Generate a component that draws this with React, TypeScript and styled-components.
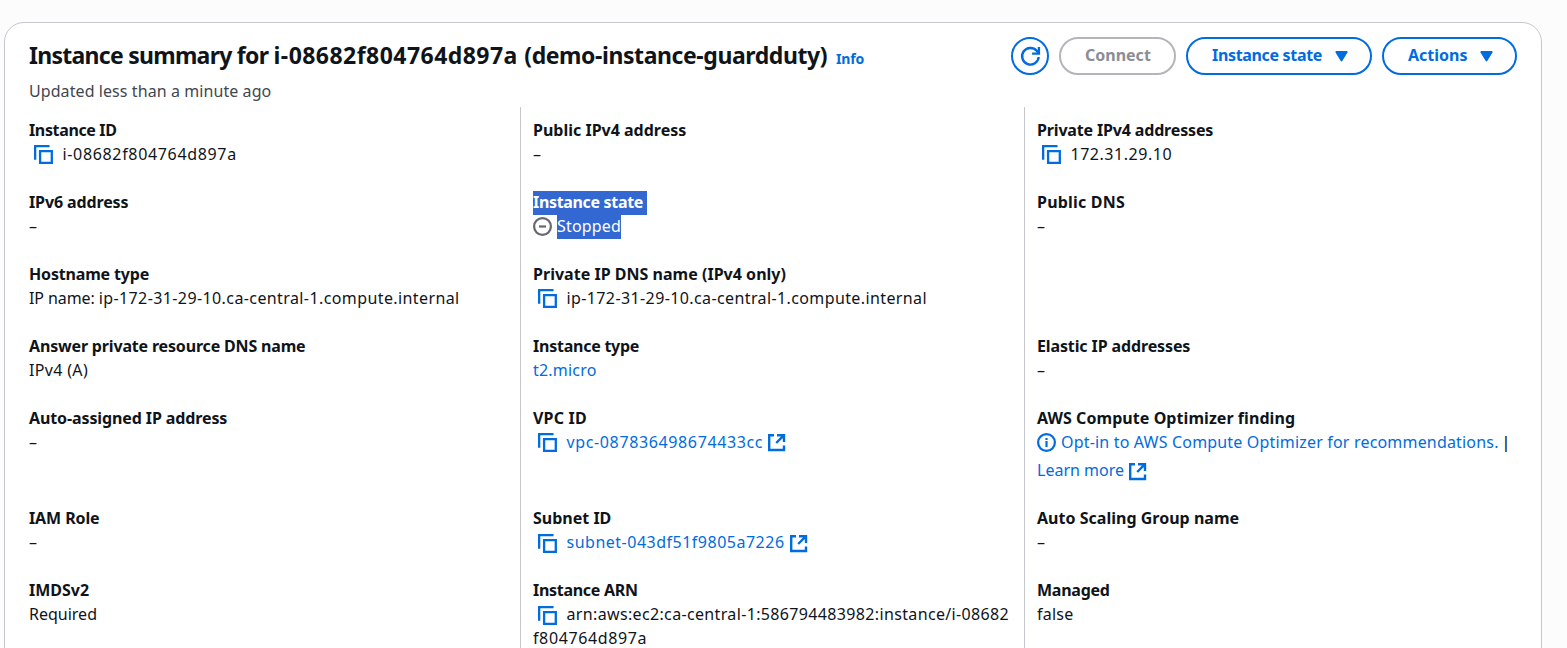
import React from "react";
import styled, { createGlobalStyle } from "styled-components";

const color = {
  text: "#0f141a",
  secondary: "#424650",
  link: "#006ce0",
  divider: "#c6c6cd",
  disabledText: "#8c8c94",
  disabledBorder: "#b4b4bb",
  muted: "#656871",
  selection: "#3367d1",
};

const GlobalStyle = createGlobalStyle`
  * { box-sizing: border-box; }
  body {
    margin: 0;
    height: 648px;
    overflow: hidden;
    background: #fcfcfd;
    color: ${color.text};
    font: 400 16px/24px "Noto Sans", "Open Sans", sans-serif;
  }
`;

const Page = styled.main`
  height: 648px;
  padding: 22px 25px 0 4px;
  overflow: hidden;
`;

const Panel = styled.section`
  height: 700px;
  padding: 14px 24px 0;
  background: #fff;
  border: 1px solid ${color.divider};
  border-radius: 20px;
`;

const Header = styled.header`
  display: flex;
  justify-content: space-between;
  align-items: flex-start;
  height: 70px;
`;

const Heading = styled.div`
  display: flex;
  flex-direction: column;
`;

const TitleLine = styled.div`
  display: flex;
  align-items: baseline;
  gap: 9px;
  height: 42px;
`;

const Title = styled.h1`
  margin: 0;
  font-size: 23px;
  line-height: 36px;
  font-weight: 700;
  white-space: nowrap;
`;

const InfoLink = styled.a`
  color: ${color.link};
  font-size: 14px;
  font-weight: 700;
  letter-spacing: -0.2px;
`;

const Updated = styled.p`
  margin: 0;
  color: ${color.secondary};
  letter-spacing: 0.08px;
`;

const Toolbar = styled.div`
  display: flex;
  gap: 10px;
`;

const Button = styled.button<{ $width: number }>`
  display: flex;
  align-items: center;
  justify-content: space-between;
  width: ${(p) => p.$width}px;
  height: 38px;
  padding: 0 22px 2px 24px;
  border: 2px solid ${color.link};
  border-radius: 19px;
  background: #fff;
  color: ${color.link};
  font: 700 16px/24px "Noto Sans", "Open Sans", sans-serif;
  white-space: nowrap;

  &:disabled {
    border-color: ${color.disabledBorder};
    color: ${color.disabledText};
  }
`;

const IconButton = styled(Button)`
  justify-content: center;
  padding: 0;
`;

const Details = styled.dl`
  display: grid;
  grid-template-columns: 491px 504px 1fr;
  margin: 0;
`;

const Cell = styled.div<{ $first: boolean; $divided: boolean }>`
  padding: ${(p) => (p.$first ? 11 : 0)}px 0 24px ${(p) => (p.$divided ? 12 : 0)}px;
  border-left: ${(p) => (p.$divided ? `1px solid ${color.divider}` : "0")};
`;

const Label = styled.dt<{ $track?: number }>`
  font-weight: 700;
  letter-spacing: ${(p) => p.$track ?? 0}px;
  height: 24px;
  white-space: nowrap;
`;

const Value = styled.dd`
  margin: 0;
  min-height: 24px;
`;

const Line = styled.div<{ $height?: number }>`
  display: flex;
  align-items: flex-start;
  height: ${(p) => p.$height ?? 24}px;
  line-height: ${(p) => p.$height ?? 24}px;
  white-space: nowrap;
`;

const Text = styled.span<{ $track?: number }>`
  letter-spacing: ${(p) => p.$track ?? 0}px;
`;

const Separator = styled.span`
  margin-left: 3px;
  font-weight: 500;
`;

const Link = styled.a<{ $track?: number }>`
  color: ${color.link};
  letter-spacing: ${(p) => p.$track ?? 0}px;
`;

const Selected = styled.span<{ $width: number }>`
  display: inline-block;
  width: ${(p) => p.$width}px;
  height: 24px;
  color: #fff;
  background: linear-gradient(transparent 1px, ${color.selection} 1px);
  box-shadow: 0 1px 0 ${color.selection};
`;

const Icon = styled.svg<{ $top?: number; $left?: number; $right?: number }>`
  display: block;
  flex: none;
  fill: none;
  margin: ${(p) => p.$top ?? 0}px ${(p) => p.$right ?? 0}px 0 ${(p) => p.$left ?? 0}px;
`;

const CopyIcon = ({ top = 3 }: { top?: number }) => (
  <Icon width="19" height="19" $top={top} $left={5} $right={9.5} stroke={color.link} strokeWidth="2.3">
    <path d="M1.15 14.7V1.15h14.4" />
    <path d="M6.1 6.1h11.7v11.7H6.1z" />
  </Icon>
);

const ExternalIcon = ({ top = 4, left = 5 }: { top?: number; left?: number }) => (
  <Icon width="18" height="18" $top={top} $left={left} stroke={color.link} strokeWidth="2.4">
    <path d="M6 1.2H1.2V16H16v-4.6" />
    <path d="M9 1.2h7V8M16 1.2 8.2 9" />
  </Icon>
);

const StoppedIcon = () => (
  <Icon width="19" height="19" $top={3} $right={5} stroke={color.muted} strokeWidth="2.2">
    <circle cx="9.5" cy="9.5" r="8.4" />
    <path d="M6 9.5h7" />
  </Icon>
);

const InfoIcon = () => (
  <Icon width="19" height="19" $top={3} $right={5} stroke={color.link} strokeWidth="2.2">
    <circle cx="9.5" cy="9.5" r="8.4" />
    <path d="M9.5 8v6M9.5 5v2" />
  </Icon>
);

const RefreshIcon = () => (
  <Icon width="22" height="22" stroke={color.link} strokeWidth="2.4">
    <path d="M19.7 12a8.3 8.3 0 1 1-2-6.2l2 2.4" />
    <path d="M19.9 2v6.6h-6.8" />
  </Icon>
);

const Caret = () => (
  <Icon width="13" height="11" $top={3} fill={color.link}>
    <path
      d="M1.3 1h10.4L6.5 9.6z"
      fill={color.link}
      stroke={color.link}
      strokeWidth="1.8"
      strokeLinejoin="round"
    />
  </Icon>
);

type Field = { label?: string; track?: number; selected?: boolean; value?: React.ReactNode };

const dash = "–";

const rows: Field[][] = [
  [
    { label: "Instance ID", track: -0.36, value: <Line><CopyIcon /><Text $track={0.66}>i-08682f804764d897a</Text></Line> },
    { label: "Public IPv4 address", value: dash },
    { label: "Private IPv4 addresses", track: -0.16, value: <Line><CopyIcon /><Text $track={0.53}>172.31.29.10</Text></Line> },
  ],
  [
    { label: "IPv6 address", track: -0.12, value: dash },
    { label: "Instance state", track: -0.33, selected: true, value: <Line><StoppedIcon /><Selected $width={64}><Text $track={0.17}>Stopped</Text></Selected></Line> },
    { label: "Public DNS", track: 0.2, value: dash },
  ],
  [
    {
      label: "Hostname type",
      track: -0.17,
      value: <><Text $track={-0.1}>IP name: </Text><Text $track={0.4}>ip-172-31-29-10.ca-central-1.compute.internal</Text></>,
    },
    { label: "Private IP DNS name (IPv4 only)", track: 0.02, value: <Line><CopyIcon /><Text $track={0.39}>ip-172-31-29-10.ca-central-1.compute.internal</Text></Line> },
    {},
  ],
  [
    { label: "Answer private resource DNS name", track: -0.17, value: <Text $track={0.33}>IPv4 (A)</Text> },
    { label: "Instance type", track: -0.24, value: <Link $track={0.2}>t2.micro</Link> },
    { label: "Elastic IP addresses", track: -0.12, value: dash },
  ],
  [
    { label: "Auto-assigned IP address", track: -0.11, value: dash },
    { label: "VPC ID", track: 0.2, value: <Line><CopyIcon /><Link $track={0.63}>vpc-087836498674433cc</Link><ExternalIcon /></Line> },
    {
      label: "AWS Compute Optimizer finding",
      track: 0.06,
      value: (
        <>
          <Line>
            <InfoIcon />
            <Link $track={0.18}>Opt-in to AWS Compute Optimizer for recommendations.</Link>
            <Separator>|</Separator>
          </Line>
          <Line $height={32}>
            <Link>Learn more</Link>
            <ExternalIcon top={9} left={5} />
          </Line>
        </>
      ),
    },
  ],
  [
    { label: "IAM Role", track: -0.1, value: dash },
    { label: "Subnet ID", value: <Line><CopyIcon top={4} /><Link $track={0.5}>subnet-043df51f9805a7226</Link><ExternalIcon top={5} /></Line> },
    { label: "Auto Scaling Group name", track: 0.02, value: dash },
  ],
  [
    { label: "IMDSv2", value: <Text>Required</Text> },
    {
      label: "Instance ARN",
      track: -0.29,
      value: (
        <>
          <Line><CopyIcon top={4} /><Text $track={0.35}>arn:aws:ec2:ca-central-1:586794483982:instance/i-08682</Text></Line>
          <Line><Text $track={0.62}>f804764d897a</Text></Line>
        </>
      ),
    },
    { label: "Managed", track: -0.25, value: <Text $track={0.25}>false</Text> },
  ],
];

const rowExtent = [0, 0, 0, 0, 76, 0, 0];

const GridCell = styled(Cell)<{ $extent: number }>`
  ${(p) => (p.$extent ? `height: ${p.$extent + 24}px;` : "")}
`;

export default function App() {
  return (
    <Page>
      <GlobalStyle />
      <Panel>
        <Header>
          <Heading>
            <TitleLine>
              <Title>
                <Text $track={-0.73}>Instance summary for </Text>
                <Text $track={0.46}>i-08682f804764d897a </Text>
                <Text $track={-0.42}>(demo-instance-guardduty)</Text>
              </Title>
              <InfoLink>Info</InfoLink>
            </TitleLine>
            <Updated>Updated less than a minute ago</Updated>
          </Heading>
          <Toolbar>
            <IconButton $width={38} aria-label="Refresh"><RefreshIcon /></IconButton>
            <Button $width={117} disabled>Connect</Button>
            <Button $width={186}><Text $track={-0.33}>Instance state</Text><Caret /></Button>
            <Button $width={135}>Actions<Caret /></Button>
          </Toolbar>
        </Header>
        <Details>
          {rows.flatMap((row, r) =>
            row.map((field, c) => (
              <GridCell key={`${r}-${c}`} $first={r === 0} $divided={c > 0} $extent={rowExtent[r]}>
                {field.label && (
                  <Label $track={field.track}>
                    {field.selected ? <Selected $width={114}>{field.label}</Selected> : field.label}
                  </Label>
                )}
                {field.value && <Value>{field.value}</Value>}
              </GridCell>
            )),
          )}
        </Details>
      </Panel>
    </Page>
  );
}
